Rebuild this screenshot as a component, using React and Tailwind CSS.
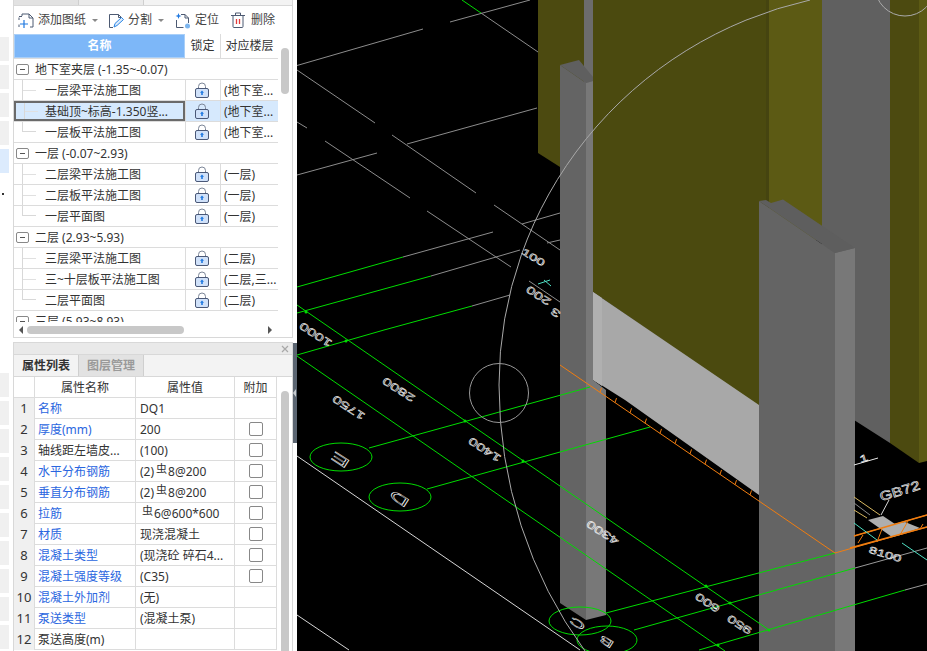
import React from "react";

const FONT = "font-['Noto_Sans','Noto_Sans_CJK_SC',sans-serif]";

const tree = [
  { g: "地下室夹层 (-1.35~-0.07)", c: [["一层梁平法施工图", "(地下室..."], ["基础顶~标高-1.350竖...", "(地下室...", true], ["一层板平法施工图", "(地下室..."]] },
  { g: "一层 (-0.07~2.93)", c: [["二层梁平法施工图", "(一层)"], ["二层板平法施工图", "(一层)"], ["一层平面图", "(一层)"]] },
  { g: "二层 (2.93~5.93)", c: [["三层梁平法施工图", "(二层)"], ["三~十层板平法施工图", "(二层,三..."], ["二层平面图", "(二层)"]] },
  { g: "三层 (5.93~8.93)", c: [] },
];

const Rebar = () => <span className="relative -top-[3px] text-[11px] leading-none ml-[2px] mr-[1px]">虫</span>;

const props = [
  ["名称", "DQ1", false, true],
  ["厚度(mm)", "200", true, true],
  ["轴线距左墙皮...", "(100)", true, false],
  ["水平分布钢筋", <>(2)<Rebar />8@200</>, true, true],
  ["垂直分布钢筋", <>(2)<Rebar />8@200</>, true, true],
  ["拉筋", <><Rebar />6@600*600</>, true, true],
  ["材质", "现浇混凝土", true, true],
  ["混凝土类型", "(现浇砼 碎石4...", true, true],
  ["混凝土强度等级", "(C35)", true, true],
  ["混凝土外加剂", "(无)", false, true],
  ["泵送类型", "(混凝土泵)", false, true],
  ["泵送高度(m)", "", false, false],
];

const Lock = () => (
  <svg width="14" height="16" viewBox="0 0 14 16" className="block">
    <path d="M3.5 7V4.5a3.5 3.5 0 0 1 7 0V7" fill="none" stroke="#7c8698" strokeWidth="1" />
    <rect x="0.5" y="6.5" width="13" height="9" rx="1.5" fill="#d0e1f9" stroke="#4a5877" />
    <path d="M7 8.5l2 2.2H7.8V13H6.2v-2.3H5z" fill="#1f78e0" />
  </svg>
);

const Caret = () => <span className="w-0 h-0 border-x-[3px] border-x-transparent border-t-[3px] border-t-[#888]" />;

const AddIcon = () => (
  <svg width="16" height="17" viewBox="0 0 16 17" fill="none" className="block">
    <path d="M4 4V2h7l4 4v9h-3M1 8V5.5M1 15v-2.5M15 6h-4V2" stroke="#4d5a72" />
    <path d="M6 8v8M2 12h8" stroke="#1f78e0" strokeWidth="1.2" />
    <path d="M1 4.5h3" stroke="#4d5a72" />
  </svg>
);
const SplitIcon = () => (
  <svg width="16" height="17" viewBox="0 0 16 17" fill="none" className="block">
    <path d="M5 15.5H1.5v-13h9l3 3V7M10.5 2.5v3h3" stroke="#4d5a72" />
    <path d="M6 15l1-3.5 6.5-6 2 2-6.5 6z" stroke="#2a86e6" fill="#dcebfb" />
  </svg>
);
const LocateIcon = () => (
  <svg width="16" height="17" viewBox="0 0 16 17" fill="none" className="block">
    <path d="M6 2.5h4l3.5 3.5v5M1.5 8v7.5h7M10 2.5V6h3.5" stroke="#4d5a72" />
    <path d="M3.5 1l.8 2.2 2.2.8-2.2.8-.8 2.2-.8-2.2L.5 4l2.2-.8z" fill="#1f78e0" />
    <circle cx="12.5" cy="14" r="2.5" fill="#7cb5ee" />
  </svg>
);
const TrashIcon = () => (
  <svg width="14" height="16" viewBox="0 0 14 16" fill="none" className="block">
    <path d="M0 3.5h14M4.5 3V1h5v2" stroke="#4d5a72" />
    <path d="M2 4v10.5a1 1 0 0 0 1 1h8a1 1 0 0 0 1-1V4" stroke="#4d5a72" />
    <path d="M5.5 7v5M8.5 7v5" stroke="#e23b3b" strokeWidth="1.3" />
  </svg>
);

function Strip() {
  return (
    <div className="w-[13px] shrink-0 bg-white pt-[37px] pr-[4px] flex flex-col h-[651px] overflow-hidden">
      {[0, 1, 2, 3].map((i) => <div key={i} className="h-[24px] mb-[4px] shrink-0 bg-[#f0f0f0]" />)}
      <div className="h-[24px] mb-[4px] shrink-0 bg-[#dcebfd]" />
      <div className="h-[196px] shrink-0 pl-[2px] pt-[16px]">
        <div className="w-[2px] h-[2px] bg-[#333]" />
      </div>
      {[0, 1, 2, 3, 4, 5, 6, 7, 8, 9].map((i) => <div key={i} className="h-[24px] mb-[4px] shrink-0 bg-[#f0f0f0]" />)}
    </div>
  );
}

function Connector({ last }) {
  return last ? (
    <span className="w-[14px] h-1/2 self-start border-l border-b border-[#d8d8d8] shrink-0" />
  ) : (
    <span className="w-[14px] h-full border-l border-[#d8d8d8] shrink-0 flex items-center">
      <span className="w-full h-px bg-[#e0e0e0]" />
    </span>
  );
}

function TreePanel() {
  return (
    <div className="h-[338px] shrink-0 border-x border-b border-[#d8d8d8] flex flex-col bg-white">
      <div className="h-[6px] shrink-0 flex bg-[#f3f3f3] border-b border-[#d8d8d8]">
        <div className="w-[65px] bg-[#e2e2e2] border-r border-[#cfcfcf]" />
        <div className="w-[65px] bg-[#ebebeb] border-r border-[#cfcfcf]" />
      </div>
      <div className="h-[28px] shrink-0 flex items-center pl-[4px] text-[12px] text-[#444]">
        <AddIcon />
        <span className="ml-[4px]">添加图纸</span>
        <span className="ml-[6px] mr-[10px] flex"><Caret /></span>
        <SplitIcon />
        <span className="ml-[4px]">分割</span>
        <span className="ml-[6px] mr-[11px] flex"><Caret /></span>
        <LocateIcon />
        <span className="ml-[4px]">定位</span>
        <span className="ml-[12px]"><TrashIcon /></span>
        <span className="ml-[6px]">删除</span>
      </div>
      <div className="flex h-[288px] shrink-0 overflow-hidden">
        <div className="w-[264px] shrink-0 text-[12px] text-[#333] overflow-hidden">
          <div className="h-[25px] flex border-b border-[#dcdcdc]">
            <div className="w-[171px] bg-[#7db7f8] text-white font-bold flex items-center justify-center border border-[#a9cff8]">名称</div>
            <div className="w-[36px] flex items-center justify-center border-r border-[#dcdcdc]">锁定</div>
            <div className="flex-1 flex items-center justify-center">对应楼层</div>
          </div>
          {tree.map((t) => (
            <React.Fragment key={t.g}>
              <div className="h-[21px] flex items-center border-b border-[#dcdcdc] pl-[2px]">
                <span className="w-[13px] h-[11px] border border-[#888] rounded-[2px] flex items-center justify-center shrink-0">
                  <span className="w-[5px] h-px bg-[#555]" />
                </span>
                <span className="ml-[6px] pt-[2px] whitespace-nowrap">{t.g}</span>
              </div>
              {t.c.map(([name, floor, sel], i) => (
                <div key={name} className={`h-[21px] flex border-b border-[#dcdcdc] ${sel ? "bg-[#d6e9fd]" : ""}`}>
                  <div className={`w-[171px] flex items-center shrink-0 pl-[8px] box-border ${sel ? "border-2 border-[#6a6a6a]" : ""}`}>
                    <Connector last={i === t.c.length - 1} />
                    <span className={`whitespace-nowrap pt-px ${sel ? "ml-[7px]" : "ml-[9px]"}`}>{name}</span>
                  </div>
                  <div className="w-[36px] shrink-0 flex items-center justify-center border-x border-[#dcdcdc] pr-[2px]"><Lock /></div>
                  <div className="flex-1 flex items-center pl-[3px] pt-px whitespace-nowrap">{floor}</div>
                </div>
              ))}
            </React.Fragment>
          ))}
        </div>
        <div className="flex-1 pt-[14px] pl-[3px]">
          <div className="w-[8px] h-[46px] rounded-[4px] bg-[#c8c8c8]" />
        </div>
      </div>
      <div className="flex-1 flex items-center pl-[5px]">
        <span className="w-0 h-0 border-y-[4px] border-y-transparent border-r-[4px] border-r-[#555]" />
        <div className="ml-[4px] w-[157px] h-[8px] rounded-[4px] bg-[#c8c8c8]" />
        <span className="ml-[84px] w-0 h-0 border-y-[4px] border-y-transparent border-l-[4px] border-l-[#555]" />
      </div>
    </div>
  );
}

function PropsPanel() {
  return (
    <div className="flex-1 min-h-0 border-x border-t border-[#d8d8d8] flex flex-col bg-white overflow-hidden">
      <div className="h-[11px] shrink-0 bg-[#e9e9e9] flex items-center justify-end pr-[3px]">
        <svg width="8" height="8" viewBox="0 0 8 8"><path d="M1 1l6 6M7 1L1 7" stroke="#a8a8a8" strokeWidth="1.2" /></svg>
      </div>
      <div className="h-[23px] shrink-0 flex bg-[#f3f3f3] border-y border-[#d8d8d8] text-[12px] font-bold">
        <div className="w-[65px] flex items-center justify-center text-[#333] border-r border-[#cfcfcf]">属性列表</div>
        <div className="w-[65px] flex items-center justify-center text-[#9a9a9a] bg-[#e2e2e2] border-r border-[#cfcfcf]">图层管理</div>
      </div>
      <div className="flex flex-1 min-h-0">
        <div className="w-[263px] shrink-0 text-[12px] text-[#333]">
          <div className="grid grid-cols-[21px_101px_99px_42px] h-[21px] border-b border-[#dcdcdc]">
            <div className="border-r border-[#dcdcdc]" />
            <div className="flex items-center justify-center pt-px border-r border-[#dcdcdc]">属性名称</div>
            <div className="flex items-center justify-center pt-px border-r border-[#dcdcdc]">属性值</div>
            <div className="flex items-center justify-center pt-px border-r border-[#dcdcdc]">附加</div>
          </div>
          {props.map(([name, value, check, link], i) => (
            <div key={name} className="grid grid-cols-[21px_101px_99px_42px] h-[21px] border-b border-[#dcdcdc]">
              <div className="bg-[#f0f0f0] flex items-center justify-center pt-px border-r border-[#dcdcdc] text-[13px]">{i + 1}</div>
              <div className={`flex items-center pl-[3px] pt-px whitespace-nowrap border-r border-[#dcdcdc] ${link ? "text-[#2a66e0]" : ""}`}>{name}</div>
              <div className="flex items-center pl-[4px] pt-px whitespace-nowrap border-r border-[#dcdcdc]">{value}</div>
              <div className="flex items-center justify-center border-r border-[#dcdcdc]">
                {check && <span className="w-[14px] h-[14px] border border-[#888] rounded-[2px] bg-white" />}
              </div>
            </div>
          ))}
        </div>
        <div className="flex-1 pt-[14px] pl-[4px]">
          <div className="w-[8px] h-full rounded-t-[4px] bg-[#c8c8c8]" />
        </div>
      </div>
    </div>
  );
}

function Dim({ x, y, t, a = 213, size = 13, sx = 1.25, sy = 0.8, w = "#f4f4f4" }) {
  return (
    <text
      transform={`translate(${x} ${y}) rotate(${a}) scale(${sx} ${sy})`}
      textAnchor="middle"
      dominantBaseline="middle"
      fontFamily="'Liberation Sans', sans-serif"
      fontSize={size}
      fill="none"
      stroke={w}
      strokeWidth="0.6"
    >
      {t}
    </text>
  );
}

const G = "#00dc00";
const W = "#8c8c8c";

function Canvas() {
  const ticks = [];
  for (let x = 600; x <= 759; x += 15) ticks.push(x);
  const lineY = (x) => 365 + (x - 560) * 0.684;
  return (
    <div className="flex-1 bg-black overflow-hidden">
      <svg width="630" height="651" viewBox="297 0 630 651" className="block" fill="none">
        {/* upper lines */}
        <g stroke={W} strokeWidth="1">
          <path d="M297 65.5L423 29M450 22L530 0M481 13L538 52" />
          <path d="M297 70L375 123M392 135L476 193M494 205L560 250" />
          <path d="M407 144L537 108M297 175L377 153" />
          <path d="M297 122L307 128M325 141L410 198M427 211L511 267" />
          <path d="M403 257L493 232M522 224L560 213M431 276L520 250M547 243L560 240M472 306L510 295" />
          <path d="M529 281L560 302" />
        </g>
        <path d="M462 0L481 13" stroke={G} />

        {/* walls behind */}
        <polygon points="538,0 584,0 584,167 560,167 538,153" fill="#4c4a10" />
        <rect x="584" y="0" width="9" height="83" fill="#6c6c6c" />
        <polygon points="593,0 767,0 767,412 593,292" fill="#4b4a0f" />
        <rect x="766" y="0" width="4" height="240" fill="#454410" />
        <rect x="769" y="0" width="53" height="240" fill="#5c5a14" />
        <polygon points="822,0 890,0 890,443 854,420 822,400" fill="#606060" />
        <polygon points="890,0 919,0 919,463 890,443" fill="#4c4a10" />
        <polygon points="919,0 927,0 927,461 919,463" fill="#5c5a14" />
        <polygon points="593,292 759,405 759,495 625,400 606,388 593,380" fill="#a8a8a8" />
        <polygon points="593,292 602,298 602,386 593,380" fill="#b0b0b0" />

        {/* pillar left */}
        <polygon points="560,65 586,83 586,620 560,603" fill="#646464" />
        <polygon points="586,83 593,81 593,380 606,390 606,615 586,620" fill="#787878" />
        <polygon points="560,65 579,60 593,77 593,81 586,83" fill="#5f5f5f" />

        {/* pillar right */}
        <polygon points="759,201 835,253 835,651 759,651" fill="#646464" />
        <polygon points="835,253 855,248 855,651 835,651" fill="#787878" />
        <polygon points="759,201 766,200 771,203 783,199.5 855,248 835,253" fill="#5e5e5e" />

        {/* green axes */}
        <g stroke={G} strokeWidth="1">
          <path d="M297 287L403 257M297 313L431 276M384 330L472 306M297 355L384 330" />
          <path d="M297 305L769 630M297 356L725 651" />
          <path d="M369 448L590 387M427 489L650 427M606 613L835 553M634 630L855 568M699 650L905 590" />
        </g>
        <g fill={G}>
          <circle cx="346" cy="341" r="1.5" /><circle cx="465" cy="421" r="1.5" /><circle cx="523" cy="461" r="1.5" />
          <circle cx="706" cy="586" r="1.5" /><circle cx="730" cy="603" r="1.5" /><circle cx="769" cy="630" r="1.5" /><circle cx="718" cy="645" r="1.5" />
          <circle cx="306" cy="312" r="1.5" />
        </g>
        <path d="M855 568L927 548M905 590L927 584" stroke="#9a9a9a" />
        <ellipse cx="341" cy="457" rx="31" ry="14" stroke={G} />
        <ellipse cx="400" cy="497" rx="31" ry="14" stroke={G} />
        <ellipse cx="580" cy="621" rx="31" ry="14" stroke={G} />
        <ellipse cx="607" cy="640" rx="30" ry="14" stroke={G} />

        {/* bottom white lines */}
        <path d="M297 456L580 650M297 615L349 650" stroke="#d6d6d6" />

        {/* orange */}
        <path d="M560 365L835 553L927 527M854 536L927 515" stroke="#f07d10" strokeWidth="1" />
        {ticks.map((x) => (
          <path key={x} d={`M${x} ${lineY(x)}l1.5 -4.5`} stroke="#f07d10" />
        ))}
        <polygon points="868,520 883,516 895,524 905,522 920,528 900,535 892,537" fill="#aeaeae" />
        <path d="M858 543l5 -8M877 542l5 -13M900 535l8 -14M920 529l3 -5" stroke="#f07d10" />
        <path d="M854 536L927 515M850 548L927 527" stroke="#f07d10" strokeWidth="1.4" />
        <path d="M854 497L880 515M854 510L867 518" stroke="#d8b860" />
        <path d="M854 503L870 515" stroke="#8c8c8c" />
        <path d="M854 523L877 540M902 543L927 560M538 284l12 -4M544 280l7 6" stroke="#4fe0c4" />
        <path d="M881 515L889 500" stroke="#d8d8d8" />
        <path d="M854 465L878 458" stroke="#e8e8e8" />

        {/* big arc + circles */}
        <path d="M810 0A400 395 0 0 0 499 385A400 430 0 0 0 585 651" stroke="#a9a9a9" strokeWidth="1" />
        <circle cx="499" cy="393" r="29.5" stroke="#999" />
        <circle cx="905" cy="-14" r="30" stroke="#aaa" />

        {/* dimensions */}
        <Dim x={316} y={334} t="1000" />
        <Dim x={399} y={389} t="2800" />
        <Dim x={349} y={407} t="1750" />
        <Dim x={485} y={449} t="1400" />
        <Dim x={603} y={532} t="4300" />
        <Dim x={708} y={602} t="600" />
        <Dim x={740} y={624} t="950" />
        <Dim x={533} y={258} t="100" a={32} size={12} />
        <Dim x={539} y={295} t="200" />
        <Dim x={556} y={312} t="3" />
        <Dim x={341} y={459} t="E" size={18} sx={1.6} sy={0.7} />
        <Dim x={400} y={498} t="D" size={18} sx={1.6} sy={0.7} />
        <Dim x={578} y={623} t="C" size={15} sx={1.5} sy={0.7} />
        <Dim x={607} y={641} t="B" size={15} sx={1.5} sy={0.7} />
        <Dim x={900} y={492} t="GB72" a={-17} size={13} sy={1} />
        <Dim x={864} y={459} t="1" a={-17} size={12} />
        <Dim x={885} y={555} t="8100" a={17} size={12} />
      </svg>
    </div>
  );
}

export default function App() {
  return (
    <div className={`w-[927px] h-[651px] flex overflow-hidden bg-white ${FONT}`}>
      <Strip />
      <div className="w-[280px] h-[651px] shrink-0 flex flex-col bg-white">
        <TreePanel />
        <div className="h-[4px] shrink-0" />
        <PropsPanel />
      </div>
      <div className="w-[4px] shrink-0 flex flex-col bg-white pt-[343px]">
        <div className="h-[100px] bg-[#5b6571] flex items-center">
          <span className="w-0 h-0 border-y-[4px] border-y-transparent border-r-[3px] border-r-[#c8ccd0]" />
        </div>
      </div>
      <Canvas />
    </div>
  );
}
